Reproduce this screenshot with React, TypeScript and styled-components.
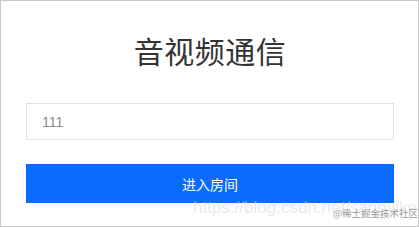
import React from "react";
import styled, { createGlobalStyle } from "styled-components";

const GlobalStyle = createGlobalStyle`
  html, body {
    margin: 0;
    padding: 0;
    background: #ffffff;
  }
  body {
    font-family: "Microsoft YaHei", "Noto Sans CJK SC", "Liberation Sans", sans-serif;
  }
  * { box-sizing: border-box; }
`;

const Frame = styled.div`
  position: relative;
  width: 419px;
  height: 227px;
  border: 1px solid #c9c9c9;
  background: #ffffff;
  padding: 27px 24px 0 25px;
  display: flex;
  flex-direction: column;
  overflow: hidden;
`;

const Title = styled.h1`
  margin: 0;
  font-family: "Noto Sans CJK SC", sans-serif;
  font-size: 30px;
  font-weight: 400;
  line-height: 44px;
  height: 44px;
  text-align: center;
  color: #333333;
  letter-spacing: 0.5px;
`;

const RoomInput = styled.input`
  margin-top: 31px;
  width: 100%;
  height: 37px;
  border: 1px solid #e2e2e2;
  outline: none;
  padding: 0 0 0 15px;
  font-family: "Liberation Sans", "Noto Sans CJK SC", sans-serif;
  font-size: 14px;
  color: #8c8c8c;
  background: #ffffff;
`;

const EnterButton = styled.button`
  margin-top: 24px;
  width: 100%;
  height: 39px;
  border: none;
  background: #0a6cff;
  color: #ffffff;
  font-family: "Noto Sans CJK SC", sans-serif;
  font-size: 14px;
  display: flex;
  align-items: center;
  justify-content: center;
  padding: 0;
  cursor: pointer;
`;

const UrlMark = styled.span`
  position: absolute;
  left: 192px;
  top: 197px;
  font-family: "Liberation Sans", Arial, sans-serif;
  font-size: 17px;
  line-height: 20px;
  color: rgba(215, 215, 215, 0.55);
  white-space: nowrap;
  pointer-events: none;
`;

const SiteMark = styled.span`
  position: absolute;
  left: 332px;
  top: 205px;
  font-family: "Noto Sans CJK SC", sans-serif;
  font-size: 9.5px;
  line-height: 14px;
  color: #9a9a9a;
  white-space: nowrap;
  pointer-events: none;
`;

export default function App() {
  return (
    <>
      <GlobalStyle />
      <Frame>
        <Title>音视频通信</Title>
        <RoomInput defaultValue="111" />
        <EnterButton>进入房间</EnterButton>
        <UrlMark>https://blog.csdn.net/sangyikeii</UrlMark>
        <SiteMark>@稀土掘金技术社区</SiteMark>
      </Frame>
    </>
  );
}
